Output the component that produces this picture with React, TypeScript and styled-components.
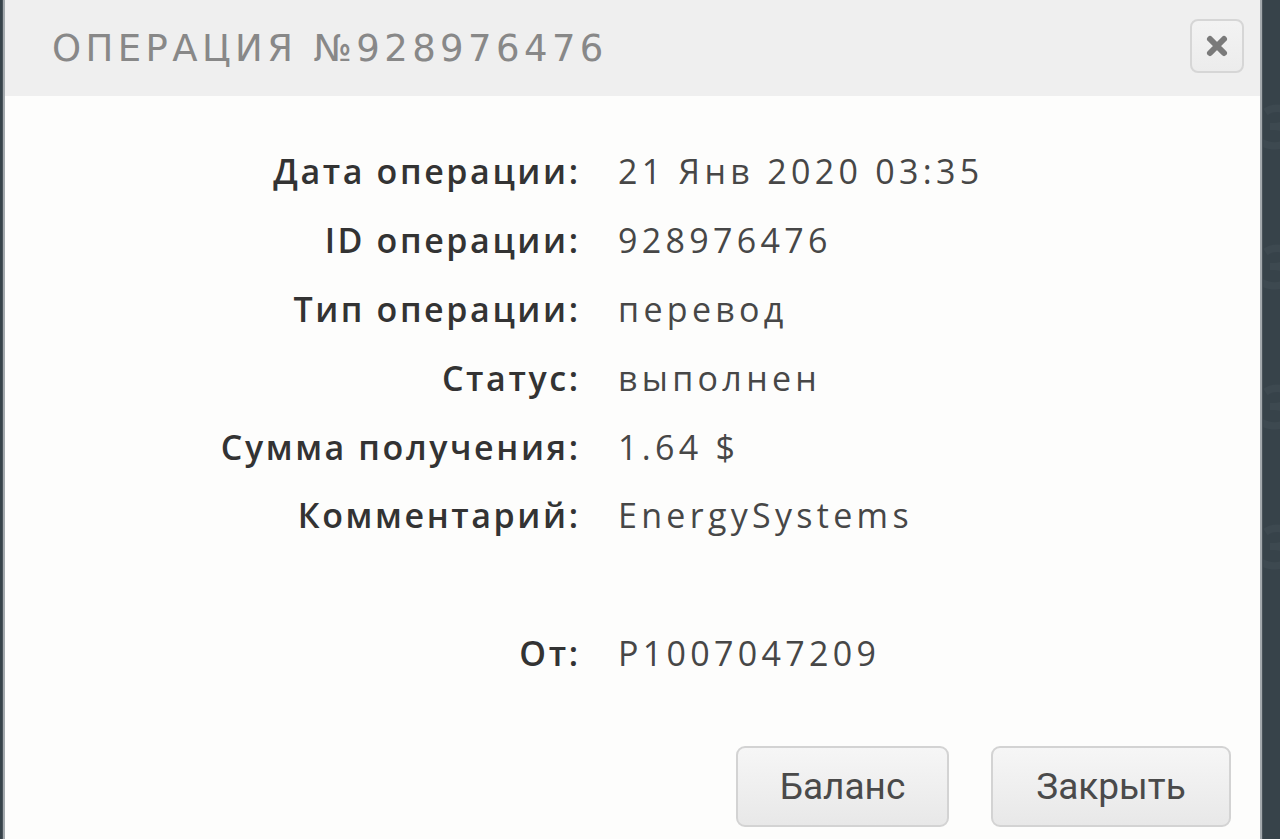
import React from 'react';
import styled, { createGlobalStyle } from 'styled-components';

const GlobalStyle = createGlobalStyle`
  html, body {
    margin: 0;
    padding: 0;
    height: 100%;
    overflow: hidden;
  }
  #root {
    height: 100%;
  }
`;

const rows = [
  { label: 'Дата операции:', value: '21 Янв 2020 03:35' },
  { label: 'ID операции:', value: '928976476' },
  { label: 'Тип операции:', value: 'перевод' },
  { label: 'Статус:', value: 'выполнен' },
  { label: 'Сумма получения:', value: '1.64 $' },
  { label: 'Комментарий:', value: 'EnergySystems' },
  { label: '', value: '' },
  { label: 'От:', value: 'P1007047209' },
];

function App() {
  return (
    <>
      <GlobalStyle />
      <Backdrop>
        <Modal>
          <Header>
            <Title>ОПЕРАЦИЯ №928976476</Title>
            <CloseButton aria-label="Закрыть">
              <svg width="24" height="24" viewBox="0 0 24 24">
                <path d="M5 5 L19 19 M19 5 L5 19" stroke="#7a7a7a" strokeWidth="6" strokeLinecap="round" />
              </svg>
            </CloseButton>
          </Header>
          <Body>
            <Details>
              {rows.map((r, i) => (
                <React.Fragment key={i}>
                  <Label>{r.label || '\u00a0'}</Label>
                  <Value>{r.value}</Value>
                </React.Fragment>
              ))}
            </Details>
            <Footer>
              <Button>Баланс</Button>
              <Button wide>Закрыть</Button>
            </Footer>
          </Body>
        </Modal>
        <Behind>
          <span>3</span>
          <span>3</span>
          <span>3</span>
          <span>3</span>
        </Behind>
      </Backdrop>
    </>
  );
}

const Backdrop = styled.div`
  height: 100%;
  background: #37434a;
  display: flex;
  padding-left: 5px;
  box-sizing: border-box;
  overflow: hidden;
`;

const Modal = styled.div`
  width: 1255px;
  flex: none;
  background: #fdfdfc;
  display: flex;
  flex-direction: column;
  position: relative;
  z-index: 1;
  box-shadow: -2px 0 1px rgba(190, 195, 198, 0.8), 2px 0 1px rgba(190, 195, 198, 0.8);
`;

const Header = styled.div`
  height: 96px;
  background: #efefef;
  display: flex;
  align-items: center;
  justify-content: space-between;
  padding: 0 16px 0 47px;
  flex: none;
`;

const Title = styled.h1`
  margin: 0;
  font-family: 'DejaVu Sans', sans-serif;
  font-weight: 400;
  font-size: 37px;
  letter-spacing: 4.4px;
  color: #888888;
  padding-top: 1px;
`;

const CloseButton = styled.button`
  width: 54px;
  height: 54px;
  border: 2px solid #d6d6d6;
  border-radius: 8px;
  background: linear-gradient(#f3f3f3, #ececec);
  display: flex;
  align-items: center;
  justify-content: center;
  padding: 0;
  margin-top: -4px;
`;

const Body = styled.div`
  padding: 41px 29px 0 0;
  display: flex;
  flex-direction: column;
`;

const Details = styled.div`
  display: grid;
  grid-template-columns: 573px auto;
  column-gap: 40px;
  grid-auto-rows: 68.8px;
  align-items: center;
`;

const Label = styled.div`
  text-align: right;
  font-family: 'Open Sans', sans-serif;
  font-weight: 600;
  font-size: 34px;
  letter-spacing: 2.6px;
  margin-right: -2.6px;
  color: #333333;
  white-space: nowrap;
`;

const Value = styled.div`
  font-family: 'Open Sans', sans-serif;
  font-weight: 400;
  font-size: 34px;
  letter-spacing: 4.3px;
  color: #474747;
  white-space: nowrap;
`;

const Footer = styled.div`
  display: flex;
  justify-content: flex-end;
  gap: 42px;
  margin-top: 59px;
`;

const Button = styled.button<{ wide?: boolean }>`
  width: ${(p) => (p.wide ? 240 : 213)}px;
  height: 81px;
  border: 2px solid #d3d3d3;
  border-radius: 9px;
  background: linear-gradient(#f6f6f6 0%, #efefef 50%, #e8e8e8 100%);
  font-family: Roboto, sans-serif;
  font-size: 37px;
  color: #4a4a4a;
  padding: 0;
`;

const Behind = styled.div`
  flex: 1;
  display: flex;
  flex-direction: column;
  padding-top: 92px;
  gap: 72px;
  span {
    font-family: 'Open Sans', sans-serif;
    font-weight: 700;
    font-size: 60px;
    line-height: 68px;
    color: #3d4950;
    margin-left: 1px;
  }
`;

export default App;
